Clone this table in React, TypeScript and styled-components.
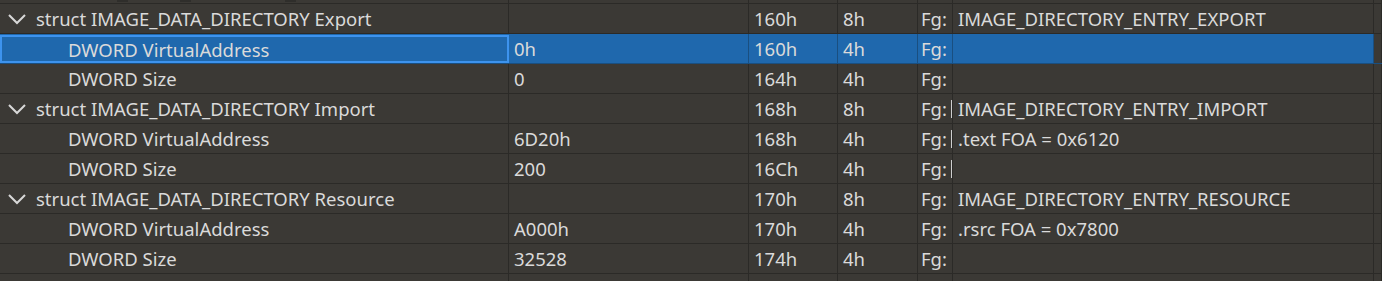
import styled, { createGlobalStyle } from 'styled-components';

type Row = {
	name: string;
	isStruct?: boolean;
	collapsed?: boolean;
	value: string;
	offset: string;
	size: string;
	comment: string;
	selected?: boolean;
	caret?: boolean;
	hideFg?: boolean;
};

type CellProps = {
	$selected?: boolean;
	$caret?: boolean;
};

const rows: Row[] = [
	{ name: 'struct IMAGE_DATA_DIRECTORY Export', isStruct: true, value: '', offset: '160h', size: '8h', comment: 'IMAGE_DIRECTORY_ENTRY_EXPORT' },
	{ name: 'DWORD VirtualAddress', value: '0h', offset: '160h', size: '4h', comment: '', selected: true },
	{ name: 'DWORD Size', value: '0', offset: '164h', size: '4h', comment: '' },
	{ name: 'struct IMAGE_DATA_DIRECTORY Import', isStruct: true, value: '', offset: '168h', size: '8h', comment: 'IMAGE_DIRECTORY_ENTRY_IMPORT', caret: true },
	{ name: 'DWORD VirtualAddress', value: '6D20h', offset: '168h', size: '4h', comment: '.text FOA = 0x6120', caret: true },
	{ name: 'DWORD Size', value: '200', offset: '16Ch', size: '4h', comment: '', caret: true },
	{ name: 'struct IMAGE_DATA_DIRECTORY Resource', isStruct: true, value: '', offset: '170h', size: '8h', comment: 'IMAGE_DIRECTORY_ENTRY_RESOURCE' },
	{ name: 'DWORD VirtualAddress', value: 'A000h', offset: '170h', size: '4h', comment: '.rsrc FOA = 0x7800' },
	{ name: 'DWORD Size', value: '32528', offset: '174h', size: '4h', comment: '' },
	// next row, only its top edge is visible
	{ name: '', isStruct: true, collapsed: true, value: '', offset: '', size: '', comment: '', hideFg: true }
];

const GlobalStyle = createGlobalStyle`
	html, body {
		margin: 0;
		padding: 0;
		background: #3b3935;
		overflow: hidden;
	}
`;

const Table = styled.div`
	width: 1382px;
	height: 281px;
	overflow: hidden;
	background: #3b3935;
	font-family: 'Noto Sans', 'Open Sans', sans-serif;
	font-size: 18.5px;
	color: #dadada;
`;

const columns = '509px 240px 89px 80px 35px 421px 8px';

const Stub = styled.div`
	display: grid;
	grid-template-columns: ${columns};
	height: 3px;
	border-bottom: 1px solid #2b2a27;
`;

const StubCell = styled.div`
	border-right: 1px solid #2b2a27;
`;

const StubMarks = styled.div`
	display: flex;
	height: 2px;
	padding-left: 117px;
	gap: 52px;

	span {
		width: 11px;
		background: #2f2e2b;
	}

	span:last-child {
		margin-left: 42px;
	}
`;

const RowWrap = styled.div<CellProps>`
	display: grid;
	grid-template-columns: ${columns};
	height: 30px;
	box-sizing: border-box;
	border-bottom: 1px solid ${(p) => (p.$selected ? '#1a4f80' : '#2b2a27')};
	background: ${(p) => (p.$selected ? '#1f68ad' : 'transparent')};
`;

const Cell = styled.div<CellProps>`
	display: flex;
	align-items: center;
	padding-left: 5px;
	border-right: 1px solid ${(p) => (p.$selected ? '#1a4f80' : '#2b2a27')};
	white-space: nowrap;
	overflow: hidden;
	position: relative;
`;

const NameCell = styled(Cell)<{ $indent: boolean }>`
	padding-left: ${(p) => (p.$indent ? (p.$selected ? '66px' : '68px') : '8px')};
	border: ${(p) => (p.$selected ? '2px solid #3d93ee' : 'none')};
	border-right: ${(p) =>
		p.$selected ? '2px solid #3d93ee' : '1px solid #2b2a27'};
	margin-top: ${(p) => (p.$selected ? '1px' : '0')};
	box-sizing: border-box;
`;

const FgCell = styled(Cell)`
	padding-left: 3px;

	&::after {
		content: '';
		display: ${(p) => (p.$caret ? 'block' : 'none')};
		position: absolute;
		right: 0;
		top: 6px;
		bottom: 5px;
		width: 1px;
		background: #cfcfcf;
	}
`;

const EdgeCell = styled(Cell)`
	background: #3b3935;
`;

const Chevron = styled.svg`
	width: 18px;
	height: 12px;
	margin-right: 10px;
	flex: none;
`;

const TreeRow = ({ row }: { row: Row }) => (
	<RowWrap $selected={row.selected}>
		<NameCell $indent={!row.isStruct} $selected={row.selected}>
			{row.isStruct && (
				<Chevron viewBox="0 0 18 12">
					{row.collapsed ? (
						<polyline points="4,0 10,6 4,12" fill="none" stroke="#d8d8d8" strokeWidth="2" />
					) : (
						<polyline points="1,2 9,10 17,2" fill="none" stroke="#d8d8d8" strokeWidth="2" />
					)}
				</Chevron>
			)}
			{row.name}
		</NameCell>
		<Cell $selected={row.selected}>{row.value}</Cell>
		<Cell $selected={row.selected}>{row.offset}</Cell>
		<Cell $selected={row.selected}>{row.size}</Cell>
		<FgCell $selected={row.selected} $caret={row.caret}>
			{row.hideFg ? '' : 'Fg:'}
		</FgCell>
		<Cell $selected={row.selected}>{row.comment}</Cell>
		<EdgeCell />
	</RowWrap>
);

const App = () => (
	<>
		<GlobalStyle />
		<Table>
			<Stub>
				<StubCell>
					<StubMarks>
						<span />
						<span />
						<span />
					</StubMarks>
				</StubCell>
				<StubCell />
				<StubCell />
				<StubCell />
				<StubCell />
				<StubCell />
				<StubCell />
			</Stub>
			{rows.map((row, i) => (
				<TreeRow key={i} row={row} />
			))}
		</Table>
	</>
);

export default App;
